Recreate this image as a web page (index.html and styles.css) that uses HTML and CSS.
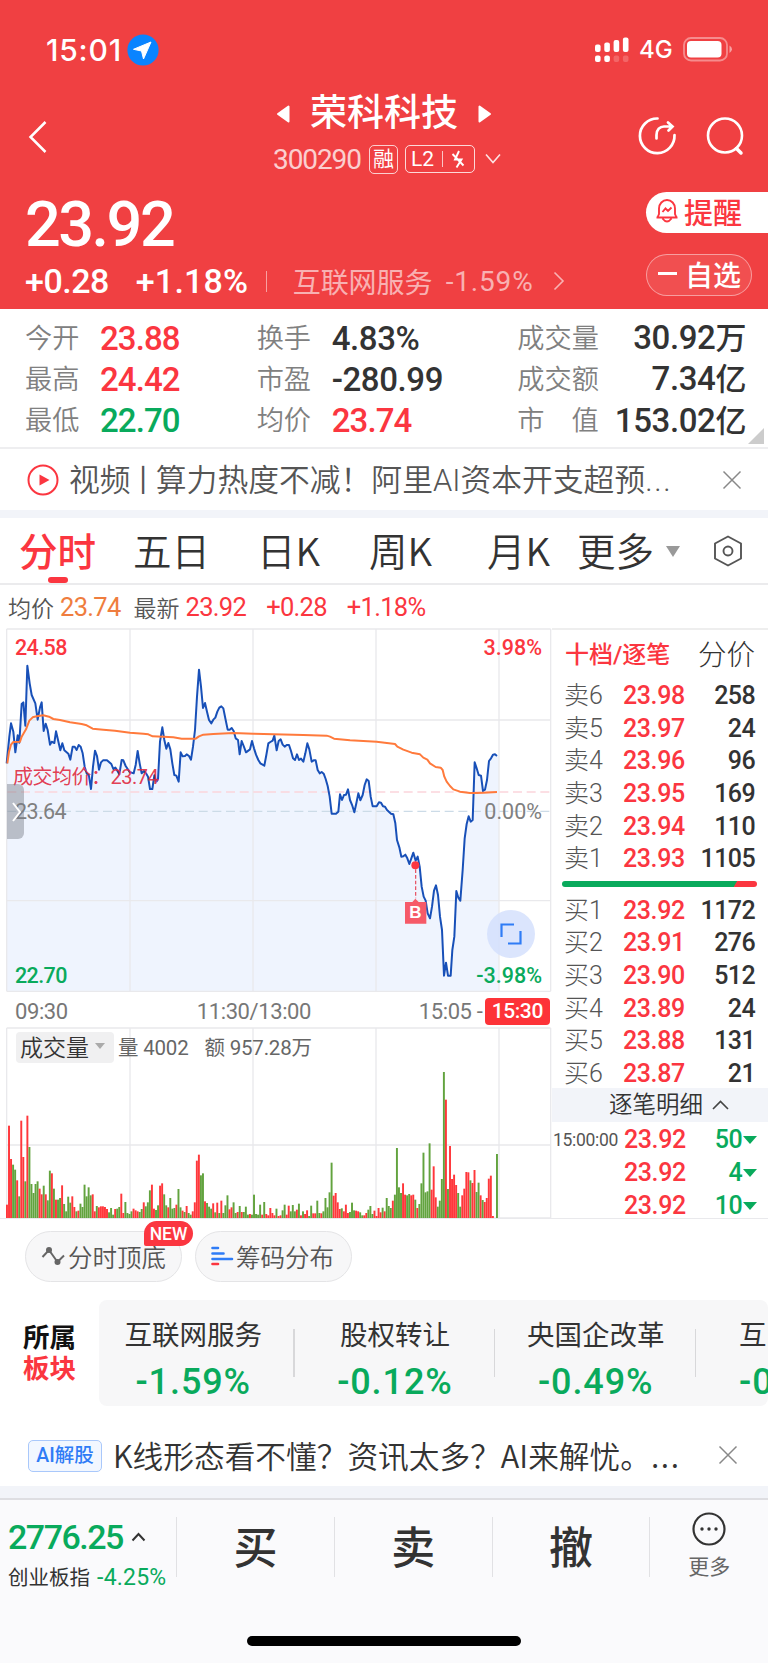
FILE: index.html
```html
<!DOCTYPE html>
<html lang="zh-CN">
<head>
    <meta charset="UTF-8">
    <meta name="viewport" content="width=device-width, initial-scale=1.0">
    <title>荣科科技 300290</title>
    <link rel="stylesheet" href="styles.css">
</head>
<body>
    <header class="header">
        <div class="status">
            <span class="clock">15:01</span>
            <svg class="loc" width="32" height="32" viewBox="0 0 32 32"><circle cx="16" cy="16" r="15.6" fill="#0a84ff"/><path d="M24 8L6.500 15.300L14.500 17L16.500 25Z" fill="#fff" stroke="#fff" stroke-width="1" stroke-linejoin="round"/></svg>
            <svg class="signal" width="36" height="26" viewBox="0 0 36 26" fill="#fff">
                <rect x="1" y="7.500" width="5.600" height="7.500" rx="2"/><rect x="10.300" y="5.500" width="5.600" height="9.500" rx="2"/><rect x="19.600" y="3" width="5.600" height="12" rx="2"/><rect x="28.900" y="0.500" width="5.600" height="14.500" rx="2"/>
                <rect x="1" y="18.500" width="5.600" height="6.500" rx="2"/><rect x="10.300" y="18.500" width="5.600" height="6.500" rx="2"/><rect x="19.600" y="18.500" width="5.600" height="6.500" rx="2" opacity=".2"/><rect x="28.900" y="18.500" width="5.600" height="6.500" rx="2" opacity=".2"/>
            </svg>
            <span class="net">4G</span>
            <svg class="battery" width="50" height="25" viewBox="0 0 50 25"><rect x="1" y="1" width="43" height="22.500" rx="7" fill="none" stroke="#fff" stroke-opacity=".4" stroke-width="1.800"/><rect x="4" y="4" width="34.500" height="16.500" rx="4" fill="#fff"/><path d="M46.500 8.500Q49 10 49 12.200T46.500 16Z" fill="#fff" opacity=".5"/></svg>
        </div>

        <div class="navbar">
            <svg class="back" width="20" height="34" viewBox="0 0 20 34"><path d="M17.500 2L2.500 17L17.500 32" fill="none" stroke="#fff" stroke-width="2.500"/></svg>
            <div class="title">
                <div class="name">
                    <svg width="13" height="18" viewBox="0 0 13 18"><path d="M11.500 1.500V16.500L1 9Z" fill="#fff" stroke="#fff" stroke-width="2" stroke-linejoin="round"/></svg>
                    <h1>荣科科技</h1>
                    <svg width="13" height="18" viewBox="0 0 13 18"><path d="M1.500 1.500V16.500L12 9Z" fill="#fff" stroke="#fff" stroke-width="2" stroke-linejoin="round"/></svg>
                </div>
                <div class="code">
                    <span class="num">300290</span>
                    <span class="rong">融</span>
                    <span class="l2"><b>L2</b><i></i><svg width="14" height="19" viewBox="0 0 14 19" fill="none" stroke="#fff" stroke-width="1.900"><path d="M8 1L4 9.500H10.500L5.500 17.500M1.500 4L12.500 15.500"/></svg></span>
                    <svg width="18" height="12" viewBox="0 0 18 12"><path d="M2 1.500L9 9.500L16 1.500" fill="none" stroke="#fff" stroke-width="1.600" opacity=".85"/></svg>
                </div>
            </div>
            <div class="tools">
                <svg width="40" height="40" viewBox="0 0 40 40" fill="none" stroke="#fff" stroke-width="2.700" stroke-linecap="round"><path d="M19.500 2.500A17.300 17.300 0 1 0 36.500 19"/><path d="M18.500 22.500V19C18.500 13.500 22 10.500 26 10.500H33.500M30 6.500L34.500 10.500L30.500 14.500"/></svg>
                <svg width="40" height="40" viewBox="0 0 40 40" fill="none" stroke="#fff" stroke-width="2.600" stroke-linecap="round"><circle cx="19" cy="19.500" r="17"/><path d="M30.500 32.500L35 37" stroke-width="3.500"/></svg>
            </div>
        </div>

        <div class="quote">
            <div>
                <div class="price num">23.92</div>
                <div class="change">
                    <span class="num">+0.28</span>
                    <span class="num pct">+1.18%</span>
                    <i></i>
                    <span class="sector">互联网服务</span>
                    <span class="sector num">-1.59%</span>
                    <svg width="12" height="20" viewBox="0 0 12 20"><path d="M1.500 1.500L10 10L1.500 18.500" fill="none" stroke="#fff" stroke-width="1.600" opacity=".6"/></svg>
                </div>
            </div>
            <div class="actions">
                <div class="remind">
                    <svg width="24" height="26" viewBox="0 0 24 26" fill="none" stroke="#fb3640" stroke-width="1.900"><path d="M1.500 19.500H22.500M2.500 19.500L4 16V10.500A8 8.500 0 0 1 20 10.500V16L21.500 19.500M7.500 20.500Q12 26.500 16.500 20.500M7.500 14L10.500 10.500L13 13L16.500 9.500"/></svg>
                    提醒
                </div>
                <div class="watch"><i></i>自选</div>
            </div>
        </div>
    </header>

    <section class="stats">
        <dl>
            <dt>今开</dt><dd class="red">23.88</dd>
            <dt>最高</dt><dd class="red">24.42</dd>
            <dt>最低</dt><dd class="green">22.70</dd>
        </dl>
        <dl class="middle">
            <dt>换手</dt><dd>4.83%</dd>
            <dt>市盈</dt><dd>-280.99</dd>
            <dt>均价</dt><dd class="red">23.74</dd>
        </dl>
        <dl class="wide">
            <dt>成交量</dt><dd>30.92<em>万</em></dd>
            <dt>成交额</dt><dd>7.34<em>亿</em></dd>
            <dt>市<s></s>值</dt><dd>153.02<em>亿</em></dd>
        </dl>
        <span class="corner"></span>
    </section>

    <section class="news">
        <svg width="32" height="32" viewBox="0 0 32 32"><circle cx="16" cy="16" r="14.500" fill="none" stroke="#fb3640" stroke-width="2"/><path d="M12.500 10.500V21.500L22.500 16Z" fill="#fb3640"/></svg>
        <p>视频<span>丨</span>算力热度不减！阿里AI资本开支超预<u>...</u></p>
        <svg class="close" width="20" height="20" viewBox="0 0 20 20"><path d="M1.500 1.500L18.500 18.500M18.500 1.500L1.500 18.500" stroke="#888" stroke-width="1.500"/></svg>
    </section>

    <nav class="tabs">
        <span class="active">分时</span>
        <span class="t2">五日</span>
        <span class="t3">日K</span>
        <span class="t4">周K</span>
        <span class="t5">月K</span>
        <span class="t6">更多</span>
        <svg class="drop" width="14" height="11" viewBox="0 0 14 11"><path d="M0 0H14L7 11Z" fill="#999"/></svg>
        <svg class="gear" width="30" height="32" viewBox="0 0 30 32" fill="none" stroke="#555" stroke-width="1.900" stroke-linejoin="round"><path d="M15 1.500L28 8.500V23.500L15 30.500L2 23.500V8.500Z"/><circle cx="15" cy="16" r="4.500"/></svg>
    </nav>

    <div class="legend">
        <span>均价</span><b class="orange">23.74</b>
        <span class="latest">最新</span><b>23.92</b><b class="gap">+0.28</b><b class="gap">+1.18%</b>
    </div>

    <main class="board">
        <div class="charts">
            <div class="price-chart">
                <!-- three drawing units per pixel -->
                <svg width="552" height="366" viewBox="0 24 1656 1098" fill="none">
                    <path id="area" fill="#eff4fe"/>
                    <path stroke="#e9e9ec" stroke-width="4" d="M20 27V1114M390 27V1114M759 27V1114M1128 27V1114M1497 27V1114M1652 27V1114M20 27H1652M20 300H1652M20 842H1652M20 1114H1652"/>
                    <path stroke="#fbd5dc" stroke-width="4" stroke-dasharray="27 14" d="M22 516H1652"/>
                    <path stroke="#ccdbe7" stroke-width="4" stroke-dasharray="27 14" d="M22 574H1652"/>
                    <path id="price" stroke="#1850b8" stroke-width="6" stroke-linejoin="round"/>
                    <path id="avg" stroke="#ff7a3c" stroke-width="6" stroke-linejoin="round"/>
                    <path stroke="#e6495c" stroke-width="3.500" stroke-dasharray="11 6" d="M1247 748V835"/>
                    <circle cx="1246" cy="736" r="12" fill="#fb3640"/>
                    <path fill="#f65a68" d="M1215 846H1237L1246 836L1256 846H1279V911H1215Z"/>
                </svg>
                <span class="mark">B</span>
                <span class="lab top red">24.58</span>
                <span class="lab top right red">3.98%</span>
                <span class="lab mid">23.64</span>
                <span class="lab mid right">0.00%</span>
                <span class="lab low green">22.70</span>
                <span class="lab low right green">-3.98%</span>
                <span class="cost">成交均价：23.74</span>
                <span class="handle"><svg width="12" height="22" viewBox="0 0 12 22"><path d="M2 2L9 11L2 20" fill="none" stroke="#fff" stroke-width="2"/></svg></span>
                <span class="full"><svg width="22" height="22" viewBox="0 0 22 22"><path d="M1.500 14V1.500H14M8 20.500H20.500V8" fill="none" stroke="#2f7cf6" stroke-width="2.200"/></svg></span>
            </div>
            <div class="axis">
                <span>09:30</span>
                <span class="noon">11:30/13:00</span>
                <span class="end">15:05 -</span>
                <b>15:30</b>
            </div>
            <div class="volume-chart">
                <svg width="552" height="192" viewBox="0 51 1656 576">
                    <path fill="none" stroke="#e9e9ec" stroke-width="4" d="M20 54V624M390 54V624M759 54V624M1128 54V624M1497 54V624M1652 54V624M20 54H1652M20 405H1652M20 624H1652"/>
                    <g id="bars"></g>
                </svg>
                <div class="vol-head">
                    <span class="pick">成交量<svg width="10" height="7" viewBox="0 0 10 7"><path d="M0 1H10L5 7Z" fill="#aaa"/></svg></span>
                    <b>量 4002</b><b class="amt">额 957.28万</b>
                </div>
            </div>
        </div>

        <aside class="orders">
            <div class="order-tabs"><b>十档/逐笔</b><span>分价</span></div>
            <div class="row"><span>卖6</span><b>23.98</b><em>258</em></div>
            <div class="row"><span>卖5</span><b>23.97</b><em>24</em></div>
            <div class="row"><span>卖4</span><b>23.96</b><em>96</em></div>
            <div class="row"><span>卖3</span><b>23.95</b><em>169</em></div>
            <div class="row"><span>卖2</span><b>23.94</b><em>110</em></div>
            <div class="row"><span>卖1</span><b>23.93</b><em>1105</em></div>
            <div class="ratio"></div>
            <div class="row"><span>买1</span><b>23.92</b><em>1172</em></div>
            <div class="row"><span>买2</span><b>23.91</b><em>276</em></div>
            <div class="row"><span>买3</span><b>23.90</b><em>512</em></div>
            <div class="row"><span>买4</span><b>23.89</b><em>24</em></div>
            <div class="row"><span>买5</span><b>23.88</b><em>131</em></div>
            <div class="row"><span>买6</span><b>23.87</b><em>21</em></div>
            <div class="detail">逐笔明细<svg width="17" height="10" viewBox="0 0 17 10"><path d="M1 9L8.500 1.500L16 9" fill="none" stroke="#444" stroke-width="1.600"/></svg></div>
            <div class="row trade"><span>15:00:00</span><b>23.92</b><em>50</em><i></i></div>
            <div class="row trade"><span></span><b>23.92</b><em>4</em><i></i></div>
            <div class="row trade"><span></span><b>23.92</b><em>10</em><i></i></div>
        </aside>
    </main>

    <div class="chips">
        <div class="chip">
            <svg width="25" height="20" viewBox="0 0 25 20"><path d="M1.500 11L8 4L16.500 16L23 9.500" fill="none" stroke="#666" stroke-width="2"/><circle cx="8" cy="4" r="3" fill="#666"/><circle cx="16.500" cy="16" r="3" fill="#666"/></svg>
            分时顶底
            <span class="new">NEW</span>
        </div>
        <div class="chip">
            <svg width="23" height="20" viewBox="0 0 23 20" stroke-width="2.600" stroke-linecap="round"><path d="M1.500 2H7M1.500 7.500H12.500M1.500 13H21" stroke="#2f7cf6"/><path d="M1.500 18H7" stroke="#fb3640"/></svg>
            筹码分布
        </div>
    </div>

    <section class="sectors">
        <h2>所属<br><span>板块</span></h2>
        <div class="cards">
            <div class="card">互联网服务<b>-1.59%</b></div>
            <div class="card">股权转让<b>-0.12%</b></div>
            <div class="card">央国企改革<b>-0.49%</b></div>
            <div class="card last">互<b>-0</b></div>
        </div>
    </section>

    <section class="ai">
        <span class="tag">AI解股</span>
        <p>K线形态看不懂？资讯太多？AI来解忧。<u>...</u></p>
        <svg class="close" width="20" height="20" viewBox="0 0 20 20"><path d="M1.500 1.500L18.500 18.500M18.500 1.500L1.500 18.500" stroke="#888" stroke-width="1.500"/></svg>
    </section>

    <footer class="footer">
        <div class="bar">
            <div class="index">
                <div class="point">2776.25<svg width="15" height="10" viewBox="0 0 15 10"><path d="M1.500 8.500L7.500 2L13.500 8.500" fill="none" stroke="#333" stroke-width="2"/></svg></div>
                <div class="idx-name">创业板指 <b>-4.25%</b></div>
            </div>
            <div class="trade-btn">买</div>
            <div class="trade-btn">卖</div>
            <div class="trade-btn">撤</div>
            <div class="more">
                <svg width="34" height="34" viewBox="0 0 34 34"><circle cx="17" cy="17" r="15.500" fill="none" stroke="#333" stroke-width="2.200"/><circle cx="10" cy="17" r="1.700" fill="#333"/><circle cx="17" cy="17" r="1.700" fill="#333"/><circle cx="24" cy="17" r="1.700" fill="#333"/></svg>
                更多
            </div>
        </div>
        <div class="home"></div>
    </footer>

    <script src="chart.js"></script>
</body>
</html>
```
FILE: styles.css
```css
* {
    box-sizing: border-box;
}
body {
    margin: 0;
    width: 768px;
    height: 1663px;
    overflow: hidden;
    background: #fff;
    color: #333;
    font-family: Roboto, "Noto Sans CJK SC", sans-serif;
}
h1, h2, p, dl, dd {
    margin: 0;
}
em, i {
    font-style: normal;
}
u {
    text-decoration: none;
    letter-spacing: 1.7px;
}
svg {
    display: block;
    flex: none;
}
.red {
    color: #fb3640;
}
.green {
    color: #09aa5c;
}

/* header */
.header {
    height: 309px;
    background: #f04042;
    color: #fff;
}
.status {
    display: flex;
    align-items: center;
    height: 99px;
    padding-left: 46px;
}
.clock {
    width: 81px;
    font: 500 30px/36px Inter, sans-serif;
    letter-spacing: 0.8px;
}
.signal {
    margin-left: 435px;
}
.net {
    width: 44px;
    margin-left: 9px;
    font: 500 24px/30px Inter, sans-serif;
}
.navbar {
    display: flex;
    height: 89px;
    padding: 1px 0 0 28px;
}
.back {
    margin-top: 20px;
}
.title {
    width: 230px;
    margin-left: 225px;
}
.name {
    display: flex;
    align-items: center;
    justify-content: space-between;
    width: 214px;
    height: 28px;
    margin-left: 4px;
}
.name h1 {
    font-size: 37px;
    font-weight: 500;
    line-height: 40px;
}
.code {
    display: flex;
    align-items: center;
    height: 30px;
    margin-top: 16px;
}
.code .num {
    width: 96px;
    font-size: 28px;
    letter-spacing: -1.1px;
    opacity: .75;
}
.rong {
    width: 29px;
    height: 29px;
    border: 1.5px solid rgba(255,255,255,.75);
    border-radius: 5px;
    font-size: 21px;
    line-height: 26px;
    text-align: center;
}
.l2 {
    display: flex;
    align-items: center;
    justify-content: space-between;
    width: 70px;
    height: 28px;
    margin: 0 9px 0 7px;
    padding: 0 9px 0 5px;
    border: 1.5px solid rgba(255,255,255,.8);
    border-radius: 5px;
}
.l2 b {
    font-size: 21px;
    font-weight: 400;
    line-height: 24px;
}
.l2 i {
    width: 1px;
    height: 16px;
    background: rgba(255,255,255,.7);
}
.tools {
    display: flex;
    gap: 28px;
    margin: 16px 0 0 135px;
}
.quote {
    display: flex;
    justify-content: space-between;
    height: 121px;
    padding-left: 25px;
}
.price {
    height: 73px;
    font-size: 63px;
    font-weight: 500;
    line-height: 73px;
    letter-spacing: -2.5px;
}
.change {
    display: flex;
    align-items: center;
    height: 40px;
    font-size: 34px;
    font-weight: 500;
    letter-spacing: -0.5px;
}
.change .pct {
    width: 114px;
    margin-left: 27px;
    letter-spacing: 0.2px;
}
.change i {
    width: 1px;
    height: 21px;
    margin: 0 26px 0 16px;
    background: rgba(255,255,255,.5);
}
.change .sector {
    width: 153px;
    font-size: 28px;
    font-weight: 400;
    letter-spacing: -0.1px;
    color: rgba(255,255,255,.6);
}
.change .sector.num {
    width: 107px;
    letter-spacing: 0.8px;
}
.actions {
    width: 122px;
    padding-top: 4px;
}
.remind {
    display: flex;
    align-items: center;
    gap: 5px;
    height: 41px;
    padding: 0 0 3px 9px;
    border-radius: 21px 0 0 21px;
    background: #fff;
    color: #fb3640;
    font-size: 29px;
    font-weight: 500;
}
.watch {
    display: flex;
    align-items: center;
    width: 106px;
    height: 42px;
    margin-top: 21px;
    padding: 0 0 3px 11px;
    border: 1.5px solid rgba(255,255,255,.45);
    border-radius: 21px;
    background: rgba(255,255,255,.08);
    font-size: 28px;
    font-weight: 500;
}
.watch i {
    width: 19px;
    height: 2.5px;
    margin-right: 8px;
    background: #fff;
}

/* quote numbers */
.stats {
    display: flex;
    position: relative;
    height: 140px;
    padding: 9px 22px 0 25px;
    border-bottom: 2px solid #eeeef0;
}
.stats dl {
    display: grid;
    grid-template-columns: 75px 1fr;
    grid-auto-rows: 41.3px;
    width: 232px;
    align-items: center;
}
.stats dl.wide {
    grid-template-columns: 84px 1fr;
    width: 229px;
    margin-left: 29px;
}
.stats dt {
    font-size: 27.2px;
    line-height: 40px;
    font-weight: 350;
    color: #808080;
    white-space: nowrap;
}
.stats dt s {
    display: inline-block;
    width: 27px;
}
.stats dd {
    font-size: 33px;
    line-height: 40px;
    font-weight: 500;
    letter-spacing: -0.9px;
}
.stats .middle dd {
    letter-spacing: -0.4px;
}
.stats .middle .red {
    letter-spacing: -0.9px;
}
.stats .wide dd {
    text-align: right;
    white-space: nowrap;
    letter-spacing: -0.4px;
}
.stats em {
    font-size: 31px;
}
.corner {
    position: absolute;
    right: 4px;
    bottom: 3px;
    border-left: 16px solid transparent;
    border-bottom: 16px solid #ccc;
}

.news {
    display: flex;
    align-items: center;
    height: 69px;
    padding: 0 26px 0 27px;
    border-bottom: 8px solid #f2f4f9;
}
.news p {
    margin: 3px 0 0 10px;
    font-size: 30.8px;
    font-weight: 350;
    line-height: 44px;
    white-space: nowrap;
    color: #555;
}
.news p span {
    margin: 0 -2.8px;
}
.close {
    margin-left: auto;
}

/* chart tabs */
.tabs {
    display: flex;
    align-items: center;
    height: 67px;
    padding: 0 25px 4px 19px;
    border-bottom: 2px solid #ebebed;
    font-family: "Noto Sans CJK SC", sans-serif;
    font-size: 38.5px;
    font-weight: 350;
    line-height: 50px;
    color: #333;
    white-space: nowrap;
}
.tabs .active {
    position: relative;
    color: #fb3640;
    font-weight: 500;
}
.tabs .active::after {
    content: "";
    position: absolute;
    left: 29px;
    bottom: -9px;
    width: 20px;
    height: 6px;
    border-radius: 3px;
    background: #fb3640;
}
.tabs span {
    width: 76px;
}
.tabs .t2 { margin-left: 38px; }
.tabs .t3 { margin-left: 48px; width: 62px; }
.tabs .t4 { margin-left: 50px; width: 66px; }
.tabs .t5 { margin-left: 52px; width: 62px; }
.tabs .t6 { margin-left: 28px; }
.drop {
    margin: 6px 0 0 13px;
}
.gear {
    margin: 4px 0 0 auto;
}

.legend {
    display: flex;
    align-items: center;
    height: 43px;
    padding-left: 8px;
    font-size: 23px;
    font-weight: 350;
    color: #555;
}
.legend b {
    margin-left: 6px;
    font-size: 25.5px;
    font-weight: 400;
    letter-spacing: -0.7px;
    color: #fb3640;
}
.legend .orange {
    color: #ef7d3e;
}
.legend .latest {
    margin-left: 13px;
}
.legend .gap {
    margin-left: 20px;
}

/* charts */
.board {
    display: flex;
    height: 591px;
    border-bottom: 1px solid #e9e9ec;
}
.charts {
    width: 552px;
}
.price-chart {
    position: relative;
    height: 366px;
}
.lab {
    position: absolute;
    left: 15px;
    font-size: 21.5px;
    line-height: 26px;
    letter-spacing: -0.6px;
    font-weight: 500;
}
.lab.right {
    left: auto;
    right: 10px;
    letter-spacing: 0;
}
.lab.top { top: 7px; }
.lab.mid {
    top: 171px;
    font-weight: 400;
    color: #808080;
}
.lab.low { top: 335px; }
.cost {
    position: absolute;
    left: 13px;
    top: 135px;
    font-size: 20px;
    line-height: 28px;
    letter-spacing: -0.5px;
    color: rgba(224,40,62,.9);
}
.mark {
    position: absolute;
    left: 405px;
    top: 275px;
    width: 21px;
    font: 700 17px/20px "Liberation Sans", sans-serif;
    text-align: center;
    color: #fff;
}
.handle {
    position: absolute;
    left: 7px;
    top: 156px;
    display: flex;
    align-items: center;
    width: 17px;
    height: 55px;
    padding-left: 4px;
    border-radius: 0 6px 6px 0;
    background: rgba(120,125,135,.45);
}
.full {
    position: absolute;
    left: 487px;
    top: 282px;
    display: flex;
    align-items: center;
    justify-content: center;
    width: 48px;
    height: 48px;
    border-radius: 50%;
    background: rgba(210,223,252,.8);
}
.axis {
    display: flex;
    align-items: center;
    height: 33px;
    padding: 1px 0 0 15px;
    font-size: 22px;
    letter-spacing: -0.4px;
    color: #777;
    white-space: nowrap;
}
.axis .noon {
    width: 113px;
    margin-left: 129px;
}
.axis .end {
    width: 66px;
    margin-left: 109px;
}
.axis b {
    width: 65px;
    height: 27px;
    border-radius: 4px;
    background: #fd3338;
    color: #fff;
    font-weight: 500;
    font-size: 21px;
    line-height: 27px;
    text-align: center;
}
.volume-chart {
    position: relative;
}
.vol-head {
    position: absolute;
    left: 16px;
    top: 5px;
    display: flex;
    align-items: center;
    height: 30px;
}
.vol-head b {
    margin: -2px 0 0 4px;
    font-size: 20.5px;
    font-weight: 400;
    letter-spacing: -0.2px;
    color: #666;
}
.vol-head .amt {
    margin-left: 16px;
}
.pick {
    display: flex;
    align-items: center;
    gap: 6px;
    width: 98px;
    height: 31px;
    padding: 0 0 3px 4px;
    border-radius: 4px;
    background: #f0f0f1;
    font-size: 23px;
    font-weight: 350;
}

/* order book */
.orders {
    flex: 1;
}
.order-tabs {
    display: flex;
    align-items: center;
    justify-content: space-between;
    height: 52px;
    padding: 0 13px 5px 13px;
    font-size: 28.5px;
    font-weight: 300;
    border-top: 2px solid #eee;
}
.order-tabs b {
    font-size: 24px;
    font-weight: 500;
    color: #fb3640;
}
.row {
    display: flex;
    align-items: center;
    height: 32.6px;
    padding: 0 13px 0 12px;
    line-height: 32px;
}
.row span {
    width: 59px;
    font-size: 25px;
    font-weight: 300;
    color: #555;
}
.row b {
    width: 62px;
    font-size: 25px;
    font-weight: 500;
    letter-spacing: -0.4px;
    color: #fb3640;
}
.row em {
    flex: 1;
    font-size: 25px;
    font-weight: 500;
    letter-spacing: -0.6px;
    text-align: right;
}
.ratio {
    height: 6px;
    margin: 5px 11px 8px 10px;
    border-radius: 3px;
    background: linear-gradient(120deg, #09aa5c 88%, #fb3640 88.500%);
}
.detail {
    display: flex;
    align-items: center;
    gap: 9px;
    height: 34px;
    margin: -2px 0 2px;
    padding: 0 0 5px 57px;
    background: #f2f4f9;
    font-size: 23.5px;
    font-weight: 350;
}
.detail svg {
    margin-top: 4px;
}
.row.trade {
    padding: 0 11px 0 1px;
}
.trade span {
    width: 71px;
    font-size: 17.5px;
    font-weight: 400;
    letter-spacing: -0.3px;
}
.trade em {
    color: #09aa5c;
}
.trade i {
    margin-left: 1px;
    border: 7px solid transparent;
    border-top: 8px solid #09aa5c;
    border-bottom: 0;
}

/* feature chips */
.chips {
    display: flex;
    gap: 13px;
    height: 81px;
    padding: 12px 0 0 25px;
}
.chip {
    position: relative;
    display: flex;
    align-items: center;
    gap: 2px;
    width: 157px;
    height: 51px;
    padding: 0 0 1px 15px;
    border: 1px solid #e4e4e6;
    border-radius: 26px;
    background: #f7f7f8;
    font-size: 24.5px;
    font-weight: 350;
    color: #555;
    white-space: nowrap;
}
.new {
    position: absolute;
    left: 118px;
    top: -11px;
    width: 49px;
    height: 25px;
    border-radius: 13px 13px 13px 2px;
    background: #fb3640;
    color: #fff;
    font-size: 17.5px;
    font-weight: 500;
    line-height: 27px;
    text-align: center;
}

.sectors {
    display: flex;
    height: 106px;
}
.sectors h2 {
    width: 99px;
    padding: 22px 0 0 23px;
    font-size: 26.5px;
    line-height: 31px;
    color: #111;
}
.sectors h2 span {
    color: #fb3640;
}
.cards {
    display: flex;
    flex: 1;
    overflow: hidden;
    border-radius: 8px;
    background: #f7f7f8;
}
.card {
    position: relative;
    flex: none;
    width: 200.8px;
    padding-top: 16px;
    font-size: 27.5px;
    line-height: 40px;
    text-align: center;
}
.card:first-child {
    width: 195.500px;
    padding-right: 7px;
}
.card::after {
    content: "";
    position: absolute;
    right: 0;
    top: 29px;
    width: 1.5px;
    height: 48px;
    background: #d8d8da;
}
.card b {
    display: block;
    margin-top: 5px;
    font-size: 36px;
    line-height: 42px;
    font-weight: 500;
    letter-spacing: 0.9px;
    color: #09aa5c;
}
.card.last {
    width: 72px;
    padding-left: 43px;
    text-align: left;
}
.card.last::after {
    display: none;
}

.ai {
    display: flex;
    align-items: center;
    height: 92px;
    padding: 10px 30px 0 28px;
    border-bottom: 12px solid #f2f4f9;
}
.tag {
    width: 74px;
    height: 32px;
    margin-top: 9px;
    border: 1.5px solid #a9c8fb;
    border-radius: 5px;
    background: #f2f7ff;
    color: #2f7cf6;
    font-size: 19.5px;
    font-weight: 500;
    line-height: 30px;
    text-align: center;
}
.ai p {
    margin: 8px 0 0 11px;
    font-family: "Noto Sans CJK SC", sans-serif;
    font-size: 30.7px;
    font-weight: 350;
    line-height: 44px;
    white-space: nowrap;
}
.ai .close {
    margin-top: 8px;
}

/* bottom bar */
.footer {
    height: 165px;
    border-top: 2px solid #dedee2;
    background: #fafafc;
}
.bar {
    display: flex;
    height: 136px;
    padding-top: 17px;
}
.index {
    width: 176px;
    padding-left: 8px;
}
.point {
    display: flex;
    align-items: center;
    gap: 8px;
    height: 40px;
    font-size: 34px;
    font-weight: 500;
    letter-spacing: -1.5px;
    color: #09aa5c;
}
.idx-name {
    margin-top: 6px;
    font-size: 20.5px;
    line-height: 30px;
    white-space: nowrap;
}
.idx-name b {
    margin-left: 2px;
    font-size: 23px;
    font-weight: 400;
    letter-spacing: 0.2px;
    color: #09aa5c;
}
.trade-btn {
    width: 157.800px;
    height: 60px;
    border-left: 1.5px solid #e1e1e4;
    font-size: 44px;
    font-weight: 500;
    line-height: 64px;
    text-align: center;
}
.more {
    display: flex;
    flex: 1;
    flex-direction: column;
    align-items: center;
    gap: 5px;
    height: 60px;
    border-left: 1.5px solid #e1e1e4;
    font-size: 21px;
    line-height: 32px;
    color: #666;
}
.more svg {
    margin-top: -5px;
}
.home {
    width: 274px;
    height: 10px;
    margin: 0 auto;
    border-radius: 5px;
    background: #000;
}
```
FILE: chart.js
```js
const price = "20,430 28,350 33,310 40,335 46,397 53,346 58,368 65,252 70,247 76,317 82,137 89,190 95,225 106,250 113,299 120,262 125,247 131,333 137,311 143,330 150,374 155,365 163,369 168,334 174,360 181,391 187,370 193,391 205,401 211,419 218,380 224,380 230,390 236,375 242,380 248,400 254,440 260,460 267,468 273,507 279,440 285,392 291,408 297,449 303,427 309,421 321,421 334,432 340,447 346,443 352,452 358,463 365,420 370,421 377,438 389,456 401,460 407,435 413,393 419,430 425,460 432,453 438,460 444,470 450,507 457,507 463,466 469,485 474,478 480,365 487,322 493,360 499,386 505,369 511,388 517,430 523,465 529,467 536,485 542,397 548,409 555,408 560,403 567,408 573,419 579,380 585,330 591,230 597,149 603,200 609,264 615,249 621,275 627,300 634,310 640,299 646,293 652,275 658,263 664,259 670,265 677,300 683,329 689,329 695,324 701,333 707,355 714,360 719,403 725,363 731,378 738,397 750,388 756,363 762,385 768,404 775,420 781,430 793,437 799,405 805,370 811,366 818,362 823,347 830,391 836,363 842,358 848,374 854,380 860,375 867,375 873,393 879,415 885,420 891,403 897,420 903,416 910,425 916,400 922,370 928,388 935,425 941,421 947,421 953,450 959,460 965,456 971,461 977,477 983,498 989,530 995,581 1008,581 1015,575 1020,523 1026,540 1032,525 1038,524 1044,508 1050,540 1057,557 1063,577 1069,550 1075,520 1081,541 1088,525 1094,495 1100,478 1106,483 1112,530 1118,559 1130,559 1137,547 1143,548 1149,559 1155,560 1161,570 1173,581 1180,583 1186,610 1191,660 1198,682 1204,710 1210,709 1216,704 1222,715 1228,732 1234,715 1240,698 1247,722 1253,710 1259,740 1265,800 1271,830 1277,842 1283,880 1290,895 1296,860 1302,812 1308,796 1314,825 1320,890 1326,930 1332,1067 1338,1028 1344,1067 1352,1067 1357,990 1363,950 1369,813 1375,833 1381,842 1388,750 1394,655 1400,612 1406,589 1412,605 1418,600 1424,427 1430,445 1436,465 1443,467 1449,513 1455,509 1461,480 1467,423 1473,415 1479,404 1485,403 1491,408";
const avg = "22,430 27,395 33,374 40,366 60,365 65,350 78,328 88,302 98,292 110,289 130,286 147,290 160,297 180,300 210,307 245,312 260,316 278,326 310,329 345,332 390,338 430,341 445,343 458,349 490,350 520,352 545,356 587,356 597,349 610,344 640,342 700,339 760,341 820,343 910,345 980,347 990,350 1002,356 1050,361 1130,365 1185,372 1192,380 1210,389 1235,398 1260,403 1270,413 1282,419 1290,430 1307,441 1322,443 1328,450 1333,470 1340,485 1350,498 1360,508 1380,515 1410,519 1430,519 1450,518 1491,516";

// one value per minute, negative = falling
const volume = [
    40,277,177,-160,-145,113,-65,292,183,-110,307,-213,-102,-75,-102,-110,88,71,-97,71,
    -53,-142,134,-88,55,-55,-60,98,-42,-20,-64,-46,65,33,-20,22,-43,-33,-100,-65,
    -92,-68,71,20,-36,32,35,35,33,27,-17,-30,-10,27,-28,-33,73,15,-48,-15,
    -12,-20,28,23,20,-18,-27,47,-35,-47,-83,100,28,-24,-38,97,104,-71,-38,32,
    -60,-28,-30,40,-87,-32,22,-18,36,-15,-10,20,47,172,190,-128,-134,50,-45,-34,
    -28,44,-17,46,-15,52,-15,-38,-68,26,32,-47,-15,18,-36,18,-18,-34,-10,12,
    -10,-70,-12,-10,-40,10,-48,12,8,30,15,8,-28,6,8,-23,-40,10,37,-20,
    -39,-20,25,-43,8,-20,12,23,-6,-37,14,14,-52,-15,14,-20,-60,-32,-77,-166,
    67,75,47,27,-29,20,40,15,-18,-46,-23,22,20,-17,-8,8,15,-25,-36,-12,
    22,6,30,17,-31,20,-60,-36,-30,52,-70,-210,-92,-75,104,70,-68,-72,68,70,
    -55,30,-42,-104,-196,-77,-80,-224,85,155,62,-34,-52,-117,-438,355,-87,216,117,130,
    99,-75,-34,68,88,138,137,-113,105,144,-78,-106,68,-54,48,60,118,127,6,0,
    -192
];

document.getElementById("price").setAttribute("d", "M" + price);
document.getElementById("avg").setAttribute("d", "M" + avg);
document.getElementById("area").setAttribute("d", "M20,1114 " + price + " 1497,408 1497,1114Z");

document.getElementById("bars").innerHTML = volume.map((v, i) => {
    const h = Math.abs(v);
    const x = 18 + i * 6.125;
    return `<rect x="${x}" y="${624 - h}" width="5.8" height="${h}" fill="${v < 0 ? "#62a33e" : "#ff373b"}"/>`;
}).join("");
```
